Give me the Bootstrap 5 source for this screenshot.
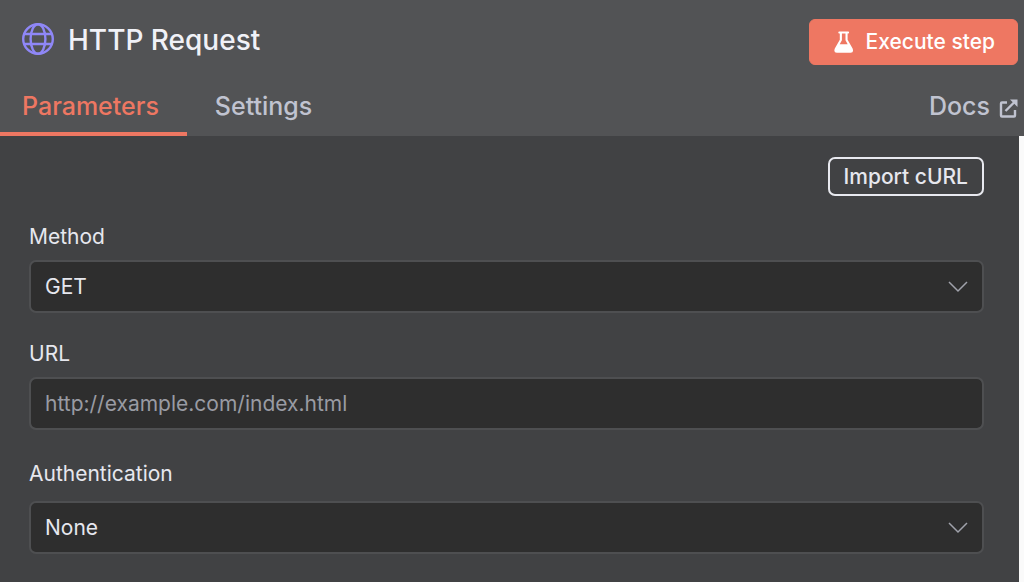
<!DOCTYPE html>
<html lang="en" data-bs-theme="dark">
<head>
<meta charset="utf-8">
<meta name="viewport" content="width=device-width, initial-scale=1">
<title>HTTP Request</title>
<link href="https://cdn.jsdelivr.net/npm/bootstrap@5.3.0/dist/css/bootstrap.min.css" rel="stylesheet">
<style>
  :root {
    --panel: #414244;
    --panel-header: #525355;
    --field: #2e2e2e;
    --field-border: #4e4f51;
    --accent: #ee7762;
    --text: #e6e7ee;
    --text-soft: #c0c3d0;
  }
  body {
    background: var(--panel);
    color: var(--text);
    font-family: Inter, "Liberation Sans", sans-serif;
    font-size: 21px;
    line-height: 28px;
  }
  .panel-header { background: var(--panel-header); }
  .title-bar { padding: 19px 6px 0 22px; }
  .title-group { gap: 14px; }
  .node-icon { margin-bottom: 2px; }
  .node-title { font-size: 28px; line-height: 42px; color: #f0f1f7; }
  .btn-execute {
    --bs-btn-color: #fff;
    --bs-btn-bg: var(--accent);
    --bs-btn-border-color: var(--accent);
    --bs-btn-hover-color: #fff;
    --bs-btn-hover-bg: #f08a77;
    --bs-btn-hover-border-color: #f08a77;
    --bs-btn-font-size: 21px;
    --bs-btn-font-weight: 500;
    --bs-btn-line-height: 28px;
    --bs-btn-padding-x: 22px;
    --bs-btn-padding-y: 8px;
    --bs-btn-border-radius: 6px;
    gap: 12px;
  }
  .panel-tabs { height: 60px; margin-top: 11px; font-size: 25px; font-weight: 500; }
  .panel-tabs .nav-link {
    padding: 0 28px;
    color: var(--text-soft);
    line-height: 60px;
    height: 60px;
    border-bottom: 4px solid transparent;
    border-radius: 0;
  }
  .panel-tabs .nav-link.active { padding-left: 22px; color: var(--accent); border-color: var(--accent); }
  .panel-tabs .docs-link { padding: 0 6px 0 0; border: 0; }
  .panel-body {
    min-height: 446px;
    padding: 21px 35px 27px 29px;
    border-right: 5px solid #fafafa;
  }
  .btn-import {
    --bs-btn-color: var(--text);
    --bs-btn-border-color: #e8e9ef;
    --bs-btn-border-width: 2px;
    --bs-btn-hover-color: #fff;
    --bs-btn-hover-border-color: #fff;
    --bs-btn-font-size: 21px;
    --bs-btn-font-weight: 500;
    --bs-btn-line-height: 27px;
    --bs-btn-padding-x: 14px;
    --bs-btn-padding-y: 4px;
    --bs-btn-border-radius: 7px;
  }
  .field-group { margin-top: 27px; }
  .field-label { margin-bottom: 9px; }
  .field-group.spaced { margin-top: 30px; }
  .spaced .field-label { margin-bottom: 13px; }
  .panel-body .form-control, .panel-body .form-select {
    height: 53px;
    padding: 0 14px;
    background-color: var(--field);
    border: 2px solid var(--field-border);
    border-radius: 7px;
    color: var(--text);
    font-size: 21px;
    line-height: 28px;
  }
  .panel-body .form-select {
    background-image: url("data:image/svg+xml,%3Csvg xmlns='http://www.w3.org/2000/svg' viewBox='0 0 20 12'%3E%3Cpath d='M1 1l9 9 9-9' fill='none' stroke='%23a0a2ab' stroke-width='1.5'/%3E%3C/svg%3E");
    background-size: 20px 12px;
    background-position: right 14px center;
  }
  .panel-body .form-control::placeholder { color: #999ba3; opacity: 1; }
</style>
</head>
<body>
<header class="panel-header">
  <div class="title-bar d-flex justify-content-between align-items-start">
    <div class="title-group d-flex align-items-center">
      <svg class="node-icon" width="32" height="32" viewBox="0 0 32 32" fill="none" stroke="#8f87f7" stroke-width="2.400" aria-hidden="true">
        <circle cx="16" cy="16" r="14.800"/>
        <ellipse cx="16" cy="16" rx="7.400" ry="14.800"/>
        <path d="M2 11h28M2 21h28"/>
      </svg>
      <h1 class="node-title fw-medium mb-0">HTTP Request</h1>
    </div>
    <button type="button" class="btn btn-execute d-flex align-items-center">
      <svg width="22" height="22" viewBox="0 0 22 22" aria-hidden="true">
        <path fill="#fff" fill-rule="evenodd" d="M7.200 .5h9q.9 0 .9 1t-.9 1h-.6v6.300l5 8.700q1.500 4.300-2 4.300H4.800q-3.500 0-2-4.300l5-8.700V2.500h-.6q-.9 0-.9-1t.9-1zM9.900 2.500v6.800L7.700 13.300h8L13.500 9.300V2.500z"/>
      </svg>
      Execute step
    </button>
  </div>
  <nav class="panel-tabs nav flex-nowrap">
    <a class="nav-link active" aria-current="page" href="#parameters">Parameters</a>
    <a class="nav-link" href="#settings">Settings</a>
    <a class="nav-link docs-link ms-auto d-flex align-items-center" href="#docs">Docs
      <svg class="ms-2 mt-1" width="20" height="20" viewBox="0 0 20 20" fill="none" stroke="currentColor" stroke-width="2.400" aria-hidden="true">
        <path d="M9 4.500H4q-1 0-1 1v12q0 1 1 1h12q1 0 1-1v-5.500M7.500 13L17 3.500"/>
        <path fill="currentColor" stroke="none" d="M12 1.500h7.500V9z"/>
      </svg>
    </a>
  </nav>
</header>
<main class="panel-body" id="parameters">
  <div class="d-flex justify-content-end">
    <button type="button" class="btn btn-import">Import cURL</button>
  </div>
  <form>
    <div class="field-group">
      <label class="field-label d-block" for="method">Method</label>
      <select class="form-select" id="method"><option>GET</option><option>POST</option></select>
    </div>
    <div class="field-group">
      <label class="field-label d-block" for="url">URL</label>
      <input class="form-control" id="url" type="text" placeholder="http://example.com/index.html">
    </div>
    <div class="field-group spaced">
      <label class="field-label d-block" for="auth">Authentication</label>
      <select class="form-select" id="auth"><option>None</option></select>
    </div>
  </form>
</main>
<script src="https://cdn.jsdelivr.net/npm/bootstrap@5.3.0/dist/js/bootstrap.bundle.min.js"></script>
</body>
</html>
